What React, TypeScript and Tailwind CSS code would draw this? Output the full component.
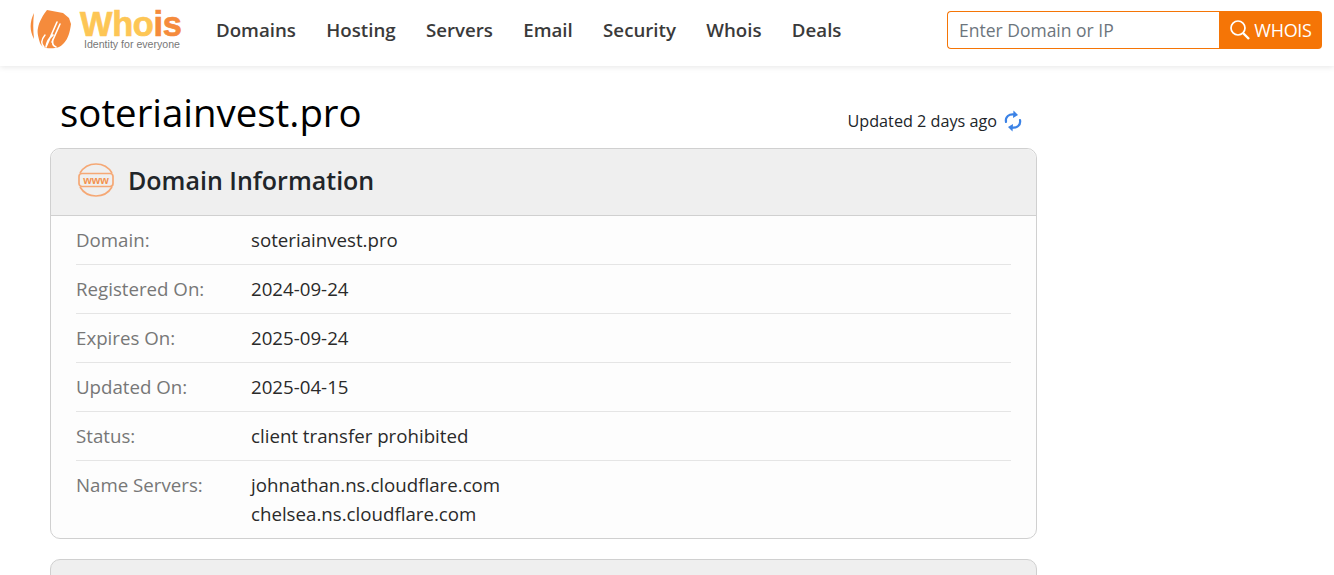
import React from "react";

const nav = ["Domains", "Hosting", "Servers", "Email", "Security", "Whois", "Deals"];
const rows: [string, string[]][] = [
  ["Domain:", ["soteriainvest.pro"]],
  ["Registered On:", ["2024-09-24"]],
  ["Expires On:", ["2025-09-24"]],
  ["Updated On:", ["2025-04-15"]],
  ["Status:", ["client transfer prohibited"]],
  ["Name Servers:", ["johnathan.ns.cloudflare.com", "chelsea.ns.cloudflare.com"]],
];

function LogoMark() {
  return (
    <svg width="42" height="40" viewBox="0 0 42 40" className="shrink-0">
      <path d="M4 3 C0 11 -1 20 4 29 C3 20 3 12 4 3Z" fill="#f58b3c" />
      <path d="M17 0 L33 3 L39 8 L41 14 C40 22 38 29 34 33 C30 38 24 39 16 38 C14 37 11 36 10 33 C8 26 7 22 8 18 C9 12 13 5 17 0Z" fill="#f58b3c" />
      <path d="M27 12 L16 37 M16 37 C17 31 19 28 23 25 M23 29 C22 33 23 36 26 37 M30 14 L22 32" fill="none" stroke="#fff" strokeWidth="1.6" strokeLinecap="round" />
      <path d="M15 25 C11 30 11 34 14 37" fill="none" stroke="#fff" strokeWidth="1.4" strokeLinecap="round" />
    </svg>
  );
}

function WwwIcon() {
  return (
    <svg width="38" height="34" viewBox="0 0 38 34" className="mb-[5px] shrink-0">
      <g fill="none" stroke="#f5a875" strokeWidth="1.7">
        <path d="M3 10 C6 5 12 1 19 1 C26 1 32 5 35 10" />
        <path d="M3 24 C6 29 12 33 19 33 C26 33 32 29 35 24" />
        <rect x="2" y="10.5" width="34" height="13" rx="3" />
      </g>
      <text x="19" y="21" textAnchor="middle" fill="#f3924f" fontSize="11" fontWeight="700" fontFamily="'Liberation Sans', sans-serif">www</text>
    </svg>
  );
}

function RefreshIcon() {
  return (
    <svg width="18" height="22" viewBox="0 0 18 22" className="shrink-0">
      <g fill="none" stroke="#3b82e6" strokeWidth="2.2" strokeLinecap="round">
        <path d="M2 12 C1 7 5 3.5 10.5 4.5" />
        <path d="M16 10 C17 15 13 18.5 7.5 17.5" />
      </g>
      <path d="M9.5 0.5 L14 5 L9 8Z" fill="#3b82e6" />
      <path d="M8.5 21.5 L4 17 L9 14Z" fill="#3b82e6" />
    </svg>
  );
}

export default function App() {
  return (
    <div className="h-[575px] overflow-hidden bg-white font-['Open_Sans',sans-serif] text-[#212529]">
      <header className="flex h-[66px] items-center bg-white pb-[6px] pl-[30px] pr-3 shadow-[0_1px_6px_rgba(0,0,0,0.1)]">
        <div className="flex w-[152px] items-center">
          <LogoMark />
          <div className="ml-[8px] flex flex-col">
            <div className="font-['Liberation_Sans',sans-serif] text-[34.4px] leading-[28px] font-bold tracking-[-0.3px] text-[#fdc655] [-webkit-text-stroke:0.7px]">
              Who<span className="text-[#f58b3c]">is</span>
            </div>
            <div className="ml-[4px] mt-[1px] font-['Liberation_Sans',sans-serif] text-[10.6px] leading-[11px] whitespace-nowrap text-[#777]">Identity for everyone</div>
          </div>
        </div>
        <nav className="mb-[1px] ml-[34px] flex">
          {nav.map((n) => (
            <a key={n} className="mr-[30.3px] text-[18.7px] leading-[27px] font-semibold text-[#3a3a3a]">{n}</a>
          ))}
        </nav>
        <form className="ml-auto flex h-[38px] w-[375px]">
          <div className="flex flex-1 items-center rounded-l border border-r-0 border-[#f57506] pl-[11px] text-[17.5px] text-[#6c757d]">Enter Domain or IP</div>
          <button type="button" className="flex w-[103px] items-center justify-center gap-[3px] rounded-r bg-[#f57506] text-[18px] font-medium tracking-[-0.3px] text-white">
            <svg width="22" height="22" viewBox="0 0 22 22" fill="none" stroke="#fff" strokeWidth="1.7">
              <circle cx="9" cy="9" r="7" />
              <path d="M14 14 L20 20" strokeWidth="2.4" />
            </svg>
            WHOIS
          </button>
        </form>
      </header>

      <main className="ml-[50px] w-[987px]">
        <div className="flex h-[82px] items-end justify-between">
          <h1 className="ml-[10px] mb-[9px] text-[38.4px] leading-[54px] text-black">soteriainvest.pro</h1>
          <div className="mr-[15px] mb-[15px] flex items-center gap-[7px] text-[16.2px] leading-[24px]">
            Updated 2 days ago
            <RefreshIcon />
          </div>
        </div>

        <section className="h-[391px] rounded-[10px] border border-[#d0d0d0] bg-[#fdfdfd]">
          <div className="flex h-[67px] items-center rounded-t-[10px] border-b border-[#d0d0d0] bg-[#efefef] pl-[26px]">
            <WwwIcon />
            <h2 className="mb-[5px] ml-[13px] text-[25px] leading-[36px] font-semibold text-[#212529]">Domain Information</h2>
          </div>
          <div className="mx-[25px]">
            {rows.map(([label, vals], i) => (
              <div key={label} className={`flex pt-[9px] text-[18.7px] leading-[29px] ${i < rows.length - 1 ? "h-[49px] border-b border-[#e5e5e5]" : ""}`}>
                <div className="w-[175px] text-[#777]">{label}</div>
                <div className="text-[#2a2a2a]">
                  {vals.map((v) => (
                    <div key={v}>{v}</div>
                  ))}
                </div>
              </div>
            ))}
          </div>
        </section>

        <section className="mt-[20px] h-[60px] rounded-t-[10px] border border-[#d0d0d0] bg-[#efefef]" />
      </main>
    </div>
  );
}
